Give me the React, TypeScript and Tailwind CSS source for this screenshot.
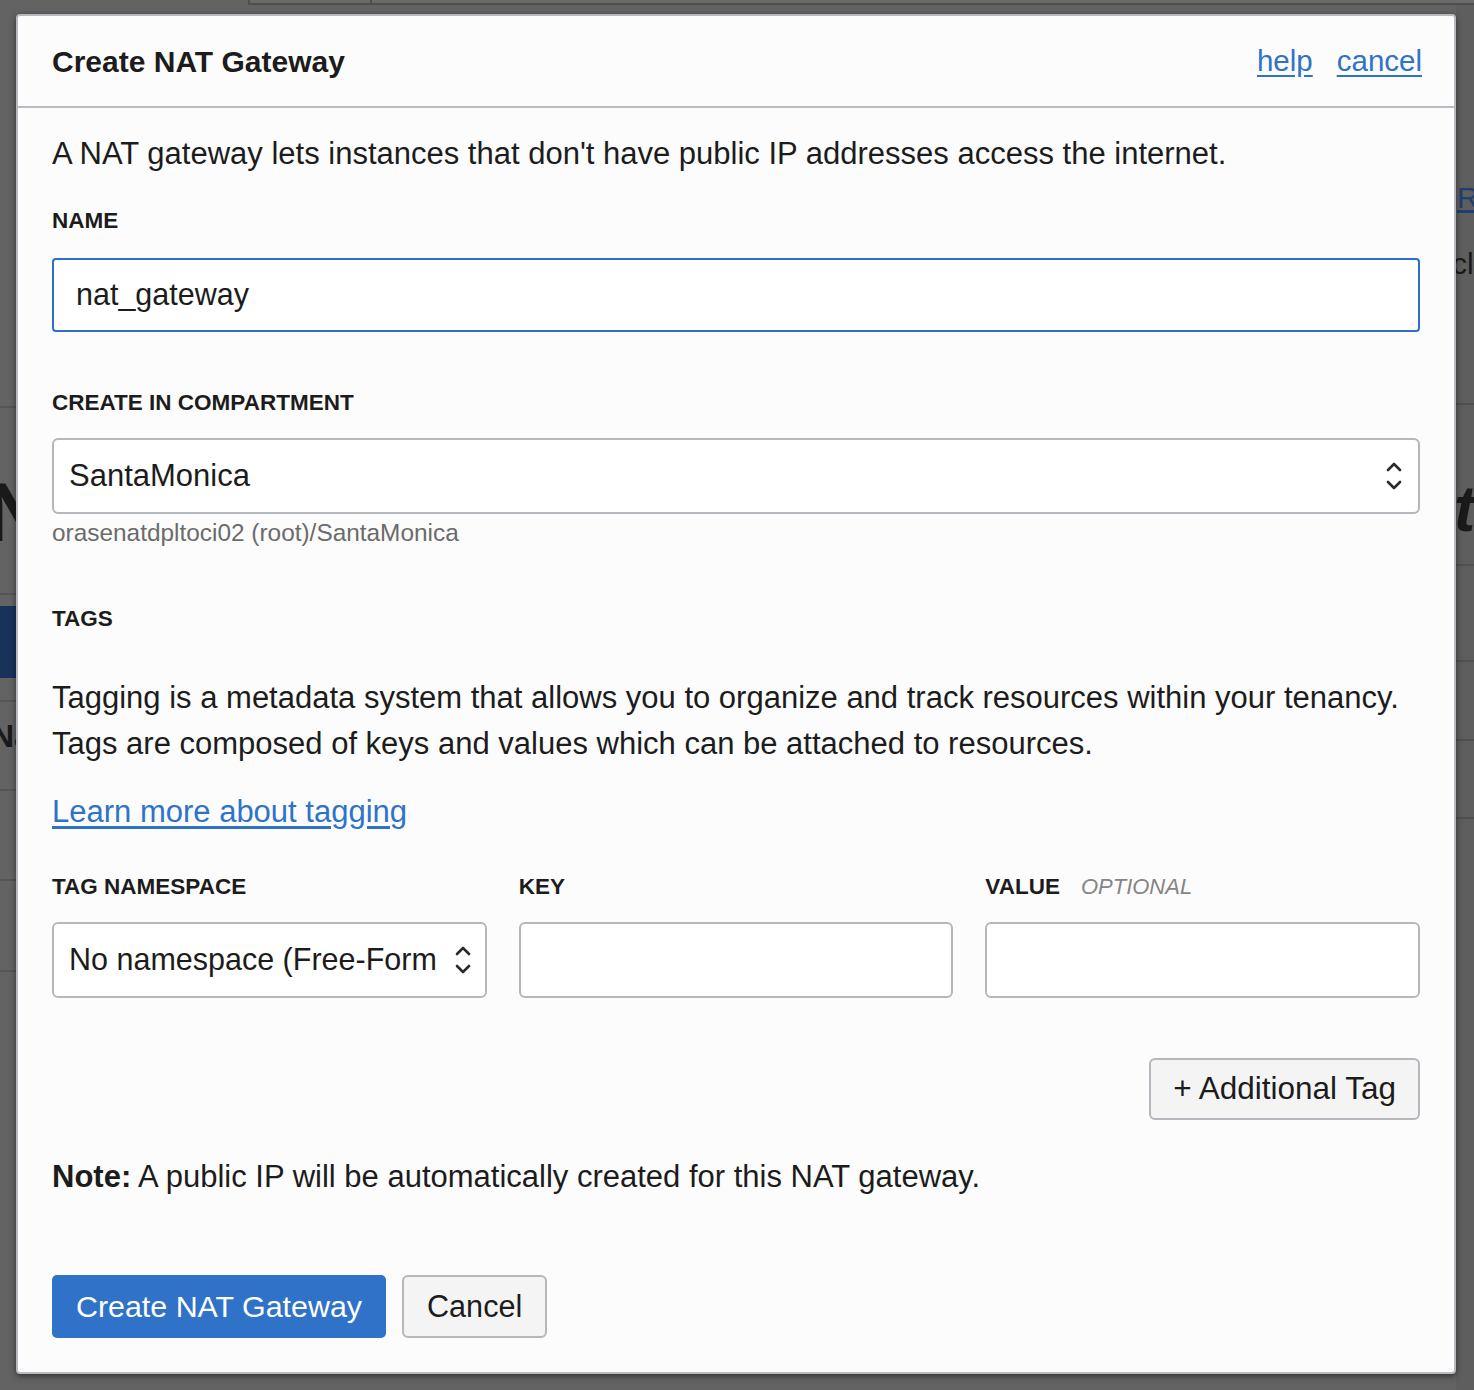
import React from "react";

const font = { fontFamily: '"Liberation Sans", Arial, sans-serif' };

function UpDown() {
  return (
    <svg width="16" height="32" viewBox="0 0 16 32" fill="none" stroke="#2a2a2a" strokeWidth="2.6" strokeLinecap="round" strokeLinejoin="round">
      <path d="M2 10 L8 4 L14 10" />
      <path d="M2 22 L8 28 L14 22" />
    </svg>
  );
}

function LeftStrip() {
  return (
    <div className="w-[16px] flex flex-col overflow-hidden">
      <div className="h-[403px] border-b-2 border-[#555]" />
      <div className="h-[187px] border-b-2 border-[#555] flex items-start pt-[62px] overflow-hidden">
        <span className="ml-[-14px] text-[84px] font-bold leading-none text-[#1a1a1a] whitespace-nowrap">N</span>
      </div>
      <div className="h-[11px]" />
      <div className="h-[72px] bg-[#18325a]" />
      <div className="h-[24px] border-b-2 border-[#555]" />
      <div className="h-[89px] border-b-2 border-[#555] flex items-start pt-[18px] overflow-hidden">
        <span className="ml-[-9px] text-[32px] font-bold leading-none text-[#1a1a1a] whitespace-nowrap">Na</span>
      </div>
      <div className="h-[90px] border-b-2 border-[#555]" />
      <div className="h-[91px] border-b-2 border-[#555]" />
      <div className="flex-1" />
    </div>
  );
}

function RightStrip() {
  return (
    <div className="w-[18px] flex flex-col overflow-hidden bg-[#5e5e5e]">
      <div className="h-[178px]" />
      <div className="h-[66px] text-[30px] leading-none text-[#1f3f6f] underline whitespace-nowrap pl-[1px]">R</div>
      <div className="h-[154px] text-[30px] leading-none text-[#1a1a1a] whitespace-nowrap ml-[-4px]">cle</div>
      <div className="h-[161px] border-t-2 border-[#505050] flex items-start pt-[72px] overflow-hidden">
        <span className="ml-[-2px] text-[64px] italic font-bold leading-none text-[#1a1a1a] whitespace-nowrap">t</span>
      </div>
      <div className="h-[96px] border-t-2 border-[#505050]" />
      <div className="h-[79px] border-t-2 border-[#505050]" />
      <div className="h-[78px] border-t-2 border-[#505050]" />
      <div className="flex-1 border-t-2 border-[#505050]" />
    </div>
  );
}

export default function App() {
  return (
    <div className="relative w-[1474px] h-[1390px] overflow-hidden bg-[#636363] flex flex-col" style={font}>
      {/* background page (behind the dialog) */}
      <div className="h-[5px] flex">
        <div className="w-[248px]" />
        <div className="w-[122px] bg-[#6a6a6a] border-b-2 border-l-2 border-[#4e4e4e]" />
        <div className="flex-1 bg-[#6a6a6a] border-b-2 border-l-2 border-[#4e4e4e]" />
      </div>
      <div className="flex-1 flex">
        <LeftStrip />
        <div className="flex-1" />
        <RightStrip />
      </div>

      {/* dialog */}
      <div className="absolute left-[16px] top-[14px] w-[1440px] h-[1360px] bg-[#fcfcfc] border-2 border-[#b6babf] rounded-[4px] shadow-[0_2px_6px_rgba(0,0,0,0.5)] text-[#1c1c1c]">
        <div className="h-[92px] flex items-center justify-between pl-[34px] pr-[34px] border-b-2 border-[#b9bdc2]">
          <div className="text-[30px] font-bold">Create NAT Gateway</div>
          <div className="flex items-center gap-[24px] text-[29.5px] text-[#2f73c8] mr-[-2px]">
            <span className="underline underline-offset-[4px]">help</span>
            <span className="underline underline-offset-[4px]">cancel</span>
          </div>
        </div>

        <div className="px-[34px] pt-[28px]">
          <div className="text-[31px] leading-[36px]">A NAT gateway lets instances that don't have public IP addresses access the internet.</div>

          <div className="mt-[37px] text-[22.5px] leading-[24px] font-bold">NAME</div>
          <div className="mt-[25px] h-[74px] border-2 border-[#2f6fc3] rounded-[4px] bg-white flex items-center pl-[22px] text-[30.5px]">nat_gateway</div>

          <div className="mt-[59px] text-[22.5px] leading-[24px] font-bold">CREATE IN COMPARTMENT</div>
          <div className="mt-[23px] h-[76px] border-2 border-[#b4b8bd] rounded-[6px] bg-white flex items-center justify-between pl-[15px] pr-[16px] text-[31px]">
            <span>SantaMonica</span>
            <UpDown />
          </div>
          <div className="mt-[6px] text-[24.4px] leading-[26px] text-[#6b6b6b]">orasenatdpltoci02 (root)/SantaMonica</div>

          <div className="mt-[61px] text-[22.5px] leading-[24px] font-bold">TAGS</div>
          <div className="mt-[44px] text-[31px] leading-[46px]">
            Tagging is a metadata system that allows you to organize and track resources within your tenancy.
            <br />
            Tags are composed of keys and values which can be attached to resources.
          </div>
          <div className="mt-[27px] text-[31px] leading-[36px]">
            <span className="text-[#2f73c8] underline underline-offset-[4px]">Learn more about tagging</span>
          </div>

          <div className="mt-[45px] grid grid-cols-3 gap-[32px]">
            <div className="text-[22.5px] leading-[24px] font-bold">TAG NAMESPACE</div>
            <div className="text-[22.5px] leading-[24px] font-bold">KEY</div>
            <div className="text-[22px] leading-[24px] flex gap-[21px]">
              <span className="font-bold text-[22.5px]">VALUE</span>
              <span className="italic text-[#858585]">OPTIONAL</span>
            </div>
          </div>
          <div className="mt-[23px] grid grid-cols-3 gap-[32px]">
            <div className="h-[76px] border-2 border-[#b4b8bd] rounded-[6px] bg-white flex items-center justify-between pl-[15px] pr-[14px] text-[30.5px] overflow-hidden">
              <span className="whitespace-nowrap overflow-hidden">No namespace (Free-Form</span>
              <UpDown />
            </div>
            <div className="h-[76px] border-2 border-[#b4b8bd] rounded-[6px] bg-white" />
            <div className="h-[76px] border-2 border-[#b4b8bd] rounded-[6px] bg-white" />
          </div>

          <div className="mt-[60px] flex justify-end">
            <div className="h-[62px] px-[22px] border-2 border-[#b4b8bd] rounded-[6px] bg-[#f4f4f4] flex items-center text-[31.5px]">+ Additional Tag</div>
          </div>

          <div className="mt-[39px] text-[31px] leading-[36px]">
            <span className="font-bold">Note:</span> A public IP will be automatically created for this NAT gateway.
          </div>

          <div className="mt-[80px] flex gap-[16px]">
            <div className="h-[63px] px-[24px] rounded-[5px] bg-[#2f72c8] text-white flex items-center text-[30.4px]">Create NAT Gateway</div>
            <div className="h-[63px] px-[23px] border-2 border-[#b4b8bd] rounded-[6px] bg-[#f4f4f4] flex items-center text-[30.6px]">Cancel</div>
          </div>
        </div>
      </div>
    </div>
  );
}
